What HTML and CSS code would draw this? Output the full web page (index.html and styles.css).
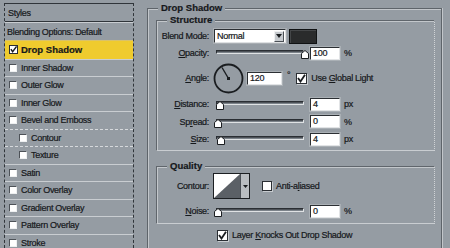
FILE: index.html
```html
<!DOCTYPE html>
<html>
<head>
<meta charset="utf-8">
<title>Layer Style - Drop Shadow</title>
<link rel="stylesheet" href="styles.css">
</head>
<body>
<div class="window">
  <div class="styles-list">
    <div class="row head">Styles</div>
    <div class="row blend">Blending Options: Default</div>
    <div class="row selected"><span class="cb checked"><svg width="8" height="8" viewBox="0 0 8 8"><path d="M1 3.5 L3 6.5 L7.5 0.5" fill="none" stroke="#1a1d20" stroke-width="1.6"/></svg></span><b>Drop Shadow</b></div>
    <div class="row"><span class="cb"></span>Inner Shadow</div>
    <div class="row"><span class="cb"></span>Outer Glow</div>
    <div class="row"><span class="cb"></span>Inner Glow</div>
    <div class="row"><span class="cb"></span>Bevel and Emboss</div>
    <div class="row sub"><span class="cb"></span>Contour</div>
    <div class="row sub"><span class="cb"></span>Texture</div>
    <div class="row"><span class="cb"></span>Satin</div>
    <div class="row"><span class="cb"></span>Color Overlay</div>
    <div class="row"><span class="cb"></span>Gradient Overlay</div>
    <div class="row"><span class="cb"></span>Pattern Overlay</div>
    <div class="row"><span class="cb"></span>Stroke</div>
  </div>

  <div class="panel">
    <div class="ptitle">Drop Shadow</div>

    <div class="group structure">
      <div class="gtitle">Structure</div>

      <div class="frow">
        <span class="lbl">Blend Mode:</span>
        <div class="select"><span class="sel-text">Normal</span><span class="sel-btn"><svg width="6" height="4" viewBox="0 0 6 4"><path d="M0 0 H6 L3 4 Z" fill="#1a1d20"/></svg></span></div>
        <div class="swatch"></div>
      </div>

      <div class="frow r-opacity">
        <span class="lbl"><u>O</u>pacity:</span>
        <div class="slider"><div class="track"></div><svg class="thumb" style="left:87px" width="8" height="9" viewBox="0 0 8 9"><path d="M0.5 8.5 V3.5 L4 0.5 L7.5 3.5 V8.5 Z" fill="#fff" stroke="#1a1d20"/></svg></div>
        <div class="input">100</div>
        <span class="unit">%</span>
      </div>

      <div class="frow r-angle">
        <span class="lbl"><u>A</u>ngle:</span>
        <svg class="dial" width="31" height="31" viewBox="0 0 31 31"><circle cx="15.5" cy="15.5" r="14" fill="none" stroke="#1a1d20" stroke-width="1.8"/><line x1="15.5" y1="15.5" x2="9" y2="4.5" stroke="#1a1d20" stroke-width="1.4"/><rect x="14" y="14" width="3" height="3" fill="#1a1d20"/></svg>
        <div class="input wide">120</div>
        <span class="deg">°</span>
        <span class="chk on"><svg width="9" height="9" viewBox="0 0 9 9"><path d="M1 4 L3.5 7.5 L8 0.8" fill="none" stroke="#1a1d20" stroke-width="1.8"/></svg></span>
        <span class="chk-label">Use <u>G</u>lobal Light</span>
      </div>

      <div class="frow r-dist">
        <span class="lbl"><u>D</u>istance:</span>
        <div class="slider"><div class="track"></div><svg class="thumb" style="left:2px" width="8" height="9" viewBox="0 0 8 9"><path d="M0.5 8.5 V3.5 L4 0.5 L7.5 3.5 V8.5 Z" fill="#fff" stroke="#1a1d20"/></svg></div>
        <div class="input">4</div>
        <span class="unit">px</span>
      </div>

      <div class="frow r-spread">
        <span class="lbl">Sp<u>r</u>ead:</span>
        <div class="slider"><div class="track"></div><svg class="thumb" style="left:0px" width="8" height="9" viewBox="0 0 8 9"><path d="M0.5 8.5 V3.5 L4 0.5 L7.5 3.5 V8.5 Z" fill="#fff" stroke="#1a1d20"/></svg></div>
        <div class="input">0</div>
        <span class="unit">%</span>
      </div>

      <div class="frow r-size">
        <span class="lbl"><u>S</u>ize:</span>
        <div class="slider"><div class="track"></div><svg class="thumb" style="left:3px" width="8" height="9" viewBox="0 0 8 9"><path d="M0.5 8.5 V3.5 L4 0.5 L7.5 3.5 V8.5 Z" fill="#fff" stroke="#1a1d20"/></svg></div>
        <div class="input">4</div>
        <span class="unit">px</span>
      </div>
    </div>

    <div class="group quality">
      <div class="gtitle">Quality</div>

      <div class="frow r-contour">
        <span class="lbl">Contour:</span>
        <div class="contour">
          <svg class="curve" width="26" height="24" viewBox="0 0 26 24"><rect width="26" height="24" fill="#fff"/><path d="M0 24 L26 0 V24 Z" fill="#5b6066"/></svg>
          <span class="ct-btn"><svg width="5" height="3" viewBox="0 0 5 3"><path d="M0 0 H5 L2.5 3 Z" fill="#1a1d20"/></svg></span>
        </div>
        <span class="chk aa"></span>
        <span class="chk-label">Anti-a<u>l</u>iased</span>
      </div>

      <div class="frow r-noise">
        <span class="lbl"><u>N</u>oise:</span>
        <div class="slider"><div class="track"></div><svg class="thumb" style="left:0px" width="8" height="9" viewBox="0 0 8 9"><path d="M0.5 8.5 V3.5 L4 0.5 L7.5 3.5 V8.5 Z" fill="#fff" stroke="#1a1d20"/></svg></div>
        <div class="input">0</div>
        <span class="unit">%</span>
      </div>
    </div>

    <div class="knock">
      <span class="chk on"><svg width="9" height="9" viewBox="0 0 9 9"><path d="M1 4 L3.5 7.5 L8 0.8" fill="none" stroke="#1a1d20" stroke-width="1.8"/></svg></span>
      <span class="chk-label">Layer <u>K</u>nocks Out Drop Shadow</span>
    </div>
  </div>
</div>
</body>
</html>
```

FILE: styles.css
```css
html, body {
  margin: 0;
  height: 100%;
  overflow: hidden;
}

body {
  background: #959ca3;
  font-family: "Liberation Sans", Arial, sans-serif;
  font-size: 9px;
  letter-spacing: -0.3px;
  color: #15181b;
  -webkit-text-stroke: 0.2px #15181b;
}

b, .ptitle, .gtitle {
  font-family: "Liberation Sans", Arial, sans-serif;
  font-weight: bold;
  font-size: 9.5px;
  letter-spacing: 0;
}

.window {
  display: flex;
  align-items: flex-start;
}

/* ---------- left styles list ---------- */
.styles-list {
  margin: 3px 0 0 4px;
  width: 130px;
  height: 245px;
  overflow: hidden;
  box-sizing: border-box;
  border-top: 1px solid #30353a;
  border-left: 1px dashed #30353a;
  border-right: 1px dashed #30353a;
}

.row {
  height: 17.5px;
  box-sizing: border-box;
  border-top: 1px solid #c9cdd1;
  display: flex;
  align-items: center;
  padding-left: 4px;
  white-space: nowrap;
}

.row.head {
  height: 18px;
  border-top: none;
  border-bottom: 1px solid #30353a;
  padding-left: 3px;
}

.row.blend {
  height: 18px;
  padding-left: 2px;
}

.row.selected {
  background: #efcb2e;
  border-top-color: #d9c26a;
  height: 18.5px;
}

.row.sub {
  padding-left: 14px;
  border-top-style: dashed;
  border-top-color: #d6d9dc;
}

.cb {
  width: 8px;
  height: 8px;
  box-sizing: border-box;
  background: #fff;
  border: 1px solid;
  border-color: #4d5258 #eef0f1 #eef0f1 #4d5258;
  margin-right: 4px;
  flex: none;
  display: flex;
  align-items: center;
  justify-content: center;
}

.cb.checked {
  width: 9px;
  height: 9px;
  border-color: #2a2e33;
  margin-right: 3px;
}

.cb.checked svg {
  width: 7px;
  height: 7px;
}

/* ---------- right panel ---------- */
.panel {
  margin: 8px 0 0 13px;
  width: 295px;
  height: 240px;
  box-sizing: border-box;
  border: 1px solid #5e646a;
  border-bottom: none;
  box-shadow: inset 1px 1px 0 #c2c6ca, 1px 0 0 #c2c6ca;
  display: flex;
  flex-direction: column;
  align-items: flex-start;
}

.ptitle {
  margin: -7px 0 0 10px;
  padding: 0 3px;
  height: 12px;
  line-height: 12px;
  background: #959ca3;
}

.group {
  margin-left: 8px;
  width: 279px;
  box-sizing: border-box;
  border: 1px solid #60666c;
  border-right: 1px dotted #d0d3d6;
  border-bottom-color: #c9cdd1;
  box-shadow: inset 1px 1px 0 #c3c7cb;
  display: flex;
  flex-direction: column;
}

.structure {
  margin-top: 6px;
  padding-bottom: 4px;
}

.quality {
  margin-top: 15px;
  padding-bottom: 5px;
}

.gtitle {
  margin: -7px 0 0 10px;
  padding: 0 3px;
  height: 12px;
  line-height: 12px;
  background: #959ca3;
  align-self: flex-start;
}

.frow {
  display: flex;
  align-items: center;
  height: 14px;
  margin-top: 3px;
  white-space: nowrap;
}

.structure .frow:first-of-type { margin-top: 2px; }
.r-opacity { margin-top: 3px; }
.r-angle { height: 32px; margin-top: 2px; }
.r-dist { margin-top: 3px; }
.r-spread { margin-top: 3.5px; }
.r-size { margin-top: 3.5px; }
.r-contour { height: 26px; margin-top: 1px; }
.r-noise { margin-top: 5px; }

.lbl {
  width: 52px;
  margin-right: 5px;
  text-align: right;
  flex: none;
}

u {
  text-decoration: underline;
  text-underline-offset: 1px;
}

.select {
  width: 72px;
  height: 14px;
  box-sizing: border-box;
  background: #fff;
  border: 1px solid;
  border-color: #2b2f33 #dfe1e3 #dfe1e3 #2b2f33;
  box-shadow: 0 0 0 1px #a9aeb3;
  display: flex;
  align-items: center;
  justify-content: space-between;
  flex: none;
}

.sel-text {
  padding-left: 2px;
}

.sel-btn {
  width: 10px;
  height: 11px;
  box-sizing: border-box;
  margin-right: 1px;
  background: #c6cace;
  border: 1px solid;
  border-color: #f0f1f2 #4b5056 #4b5056 #f0f1f2;
  display: flex;
  align-items: center;
  justify-content: center;
}

.swatch {
  margin-left: 3px;
  width: 28px;
  height: 15px;
  box-sizing: border-box;
  background: #2a2b2c;
  border: 1px solid #101213;
  box-shadow: inset 1px 1px 0 #444648;
}

.slider {
  position: relative;
  width: 92px;
  height: 14px;
  flex: none;
  margin-right: 4px;
}

.track {
  margin: 4px 2px 0 2px;
  height: 4px;
  box-sizing: border-box;
  border: 1px solid #2a2e33;
  border-bottom-color: #dfe2e4;
  border-right-color: #dfe2e4;
  background: #7c838a;
  box-shadow: inset 0 1px 0 #4d5258;
}

.thumb {
  position: absolute;
  top: 4px;
}

.input {
  width: 30px;
  height: 13px;
  box-sizing: border-box;
  background: #fff;
  border: 1px solid;
  border-color: #2b2f33 #e2e4e6 #e2e4e6 #2b2f33;
  box-shadow: 0 0 0 1px #aab0b5;
  padding-left: 2px;
  line-height: 11px;
  flex: none;
}

.input.wide {
  width: 35px;
  margin-left: 3px;
}

.unit {
  margin-left: 4px;
}

.dial {
  margin-left: -1px;
  flex: none;
}

.deg {
  margin-left: 5px;
  align-self: flex-start;
  margin-top: 8px;
}

.chk {
  width: 11px;
  height: 11px;
  box-sizing: border-box;
  background: #fff;
  border: 1px solid #2a2e33;
  box-shadow: 1px 1px 0 #c8ccd0;
  display: flex;
  align-items: center;
  justify-content: center;
  flex: none;
}

.r-angle .chk {
  margin-left: 6px;
}

.chk-label {
  margin-left: 4px;
}

.contour {
  margin-left: -1px;
  width: 37px;
  height: 26px;
  box-sizing: border-box;
  border: 1px solid #1c1f22;
  display: flex;
  flex: none;
}

.ct-btn {
  flex: 1;
  background: #b9bdc1;
  border-left: 1px solid #4b5056;
  display: flex;
  align-items: center;
  justify-content: center;
}

.chk.aa {
  width: 10px;
  height: 10px;
  margin-left: 12px;
}

.knock {
  margin: 5px 0 0 69px;
  height: 12px;
  display: flex;
  align-items: center;
  white-space: nowrap;
}
```
